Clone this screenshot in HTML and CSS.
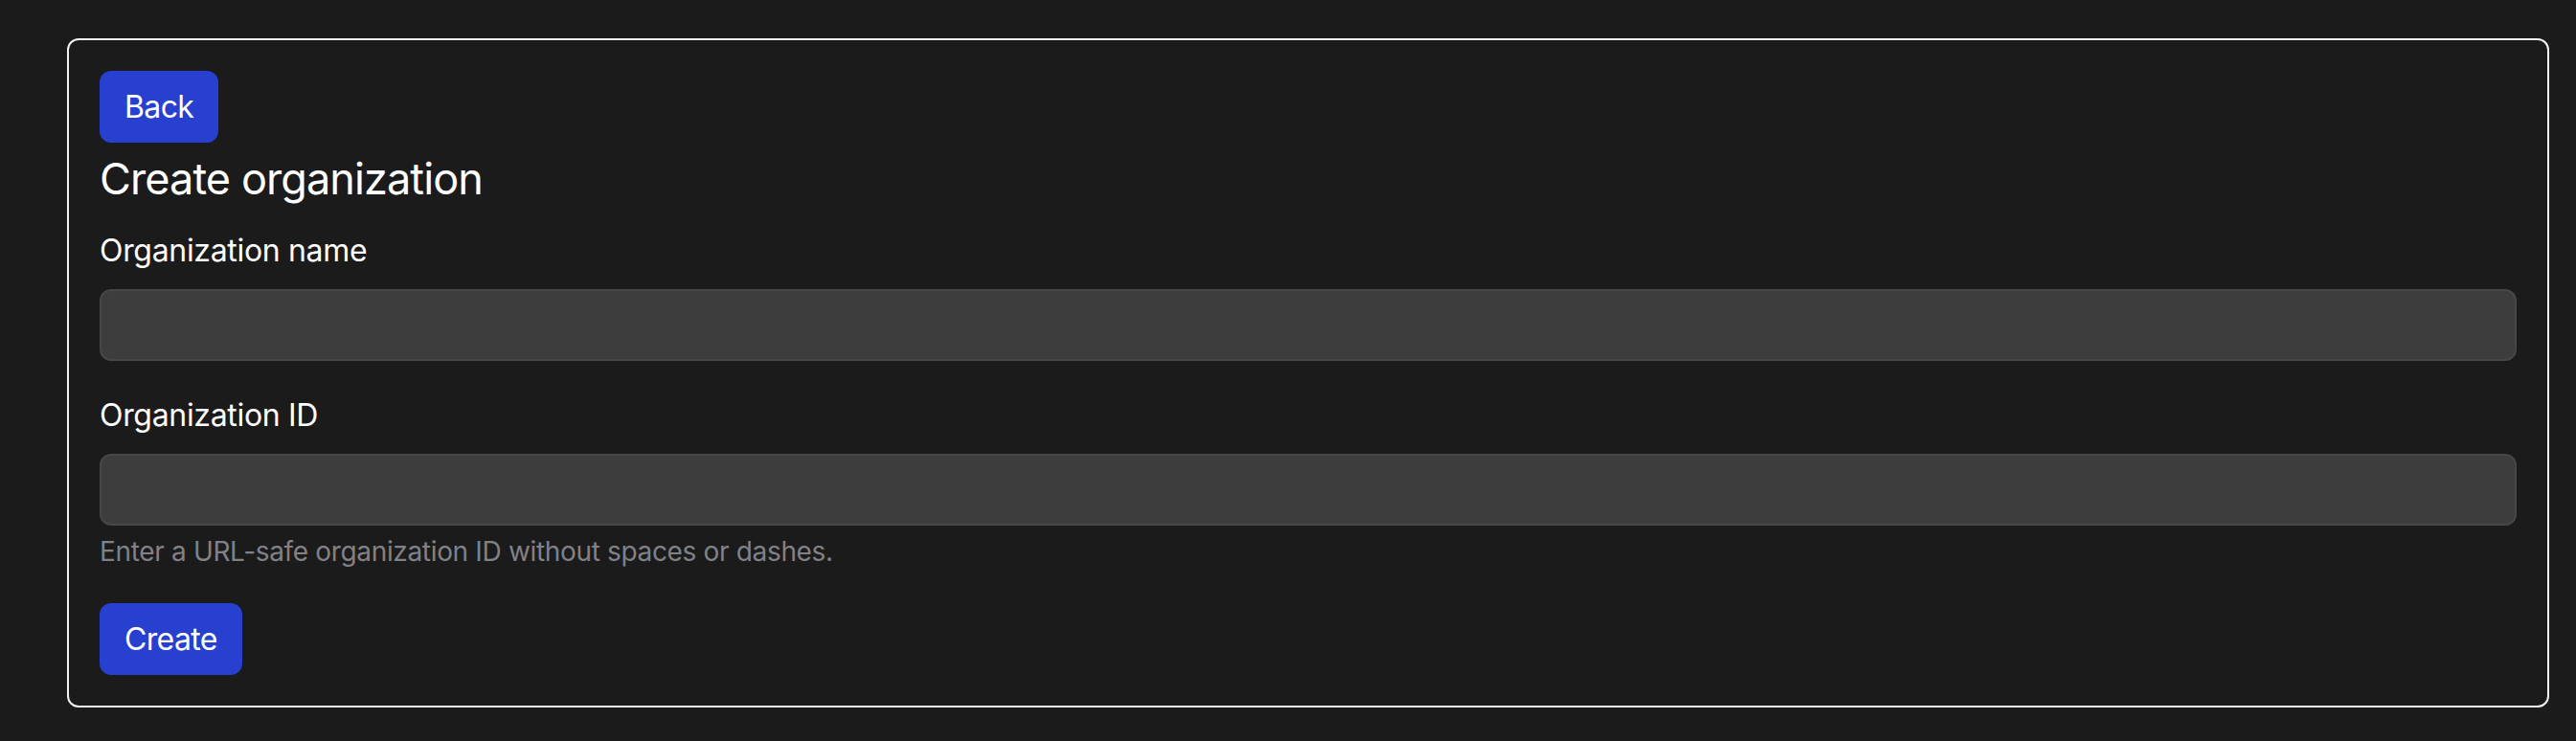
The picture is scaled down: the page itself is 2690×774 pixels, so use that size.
FILE: index.html
```html
<!DOCTYPE html>
<html lang="en">
<head>
<meta charset="utf-8">
<title>Create organization</title>
<link rel="stylesheet" href="styles.css">
</head>
<body>
<main class="page">
  <section class="card">
    <div class="back-row"><a class="btn" href="#">Back</a></div>
    <h1 class="title">Create organization</h1>
    <form class="form">
      <div class="field">
        <label class="label" for="org-name">Organization name</label>
        <input class="input" id="org-name" type="text">
      </div>
      <div class="field">
        <label class="label" for="org-id">Organization ID</label>
        <input class="input" id="org-id" type="text">
        <div class="help">Enter a URL-safe organization ID without spaces or dashes.</div>
      </div>
      <div class="actions"><button class="btn" type="button">Create</button></div>
    </form>
  </section>
</main>
</body>
</html>
```
FILE: styles.css
```css
* { box-sizing: border-box; }
html, body {
  margin: 0;
  background: #1b1b1b;
}
body {
  font-family: Inter, "Noto Sans", "Liberation Sans", sans-serif;
  color: #ffffff;
  letter-spacing: -0.02em;
}
.page {
  padding: 40px 28px 35px 70px;
}
.card {
  border: 2px solid #f2f2f2;
  border-radius: 12px;
  padding: 32px;
  background: #1b1b1b;
  display: flex;
  flex-direction: column;
}
.back-row, .actions {
  display: flex;
}
.btn {
  display: inline-flex;
  align-items: center;
  height: 75px;
  padding: 0 26px;
  background: #2740d0;
  color: #ffffff;
  border: none;
  border-radius: 12px;
  font-family: inherit;
  font-size: 32px;
  line-height: 48px;
  letter-spacing: -0.02em;
  text-decoration: none;
  cursor: pointer;
}
.title {
  margin: 10px 0 23px;
  font-size: 45px;
  line-height: 56px;
  font-weight: 400;
  letter-spacing: -0.02em;
}
.form {
  display: flex;
  flex-direction: column;
  margin: 0;
}
.field {
  display: flex;
  flex-direction: column;
  margin-bottom: 33px;
}
.label {
  font-size: 32px;
  line-height: 48px;
  margin-bottom: 16px;
}
.input {
  height: 75px;
  width: 100%;
  background: #3d3d3d;
  border: 2px solid #474747;
  border-radius: 12px;
  color: #ffffff;
  font-family: inherit;
  font-size: 32px;
  padding: 0 24px;
  outline: none;
}
.help {
  margin-top: 6px;
  font-size: 28px;
  line-height: 42px;
  color: #818187;
  letter-spacing: -0.012em;
}
```
